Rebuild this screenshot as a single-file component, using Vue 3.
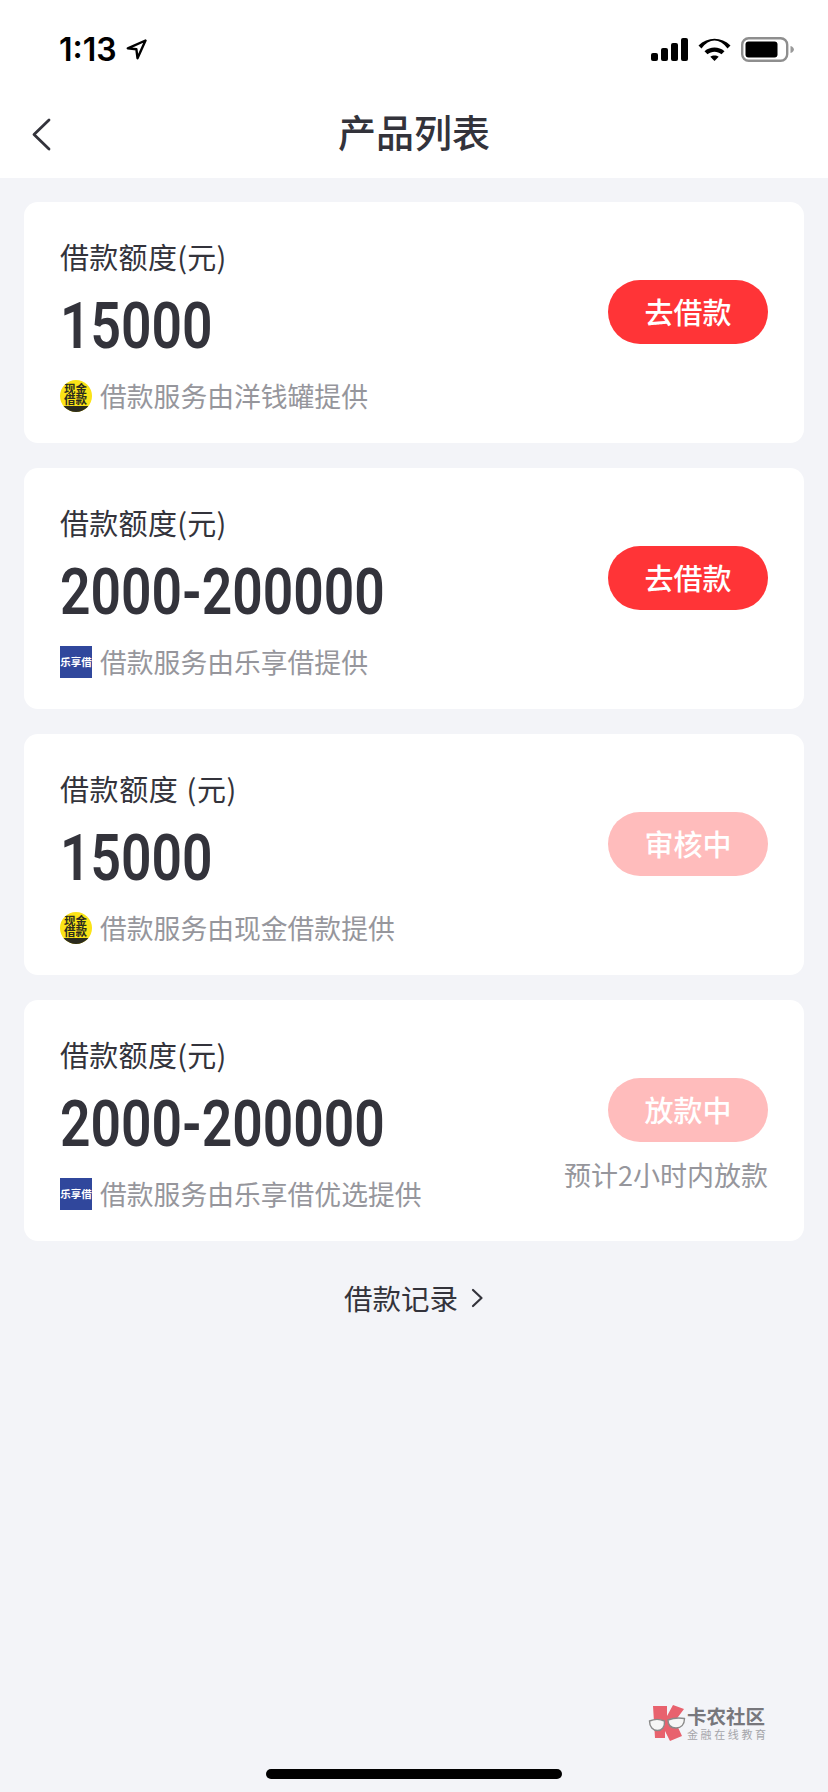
<template>
  <div class="page">
    <div class="status-bar">
      <div class="time">
        <span>1:13</span>
        <svg width="21" height="21" viewBox="0 0 21 21">
          <path d="M19.500 1.500 1.800 9.300l8.600 1 1.100 8.900z" fill="none" stroke="#000" stroke-width="2.400" stroke-linejoin="round" />
        </svg>
      </div>
      <div class="status-icons">
        <svg width="38" height="23" viewBox="0 0 38 23">
          <rect x="0" y="15" width="7" height="8" rx="2" />
          <rect x="10" y="10" width="7" height="13" rx="2" />
          <rect x="20" y="5" width="7" height="18" rx="2" />
          <rect x="30" y="0" width="7" height="23" rx="2" />
        </svg>
        <svg class="wifi" width="33" height="23" viewBox="0 0 33 23">
          <path d="M.5 7.500C9.500-1.500 23.500-1.500 32.500 7.500l-3 3.100C22-.3 11-.3 3.500 10.600z" />
          <path d="M6.500 13.200c5.500-5 14.500-5 20 0l-3 3c-4-3.400-10-3.400-14 0z" />
          <path d="M12.300 18.800c2.200-1.600 6.200-1.600 8.400 0l-4.200 4.200z" />
        </svg>
        <svg class="battery" width="53" height="25" viewBox="0 0 53 25">
          <rect x="1.200" y="1.200" width="45" height="22.600" rx="6.500" fill="none" stroke="#8e8e8e" stroke-width="2.400" />
          <rect x="4.500" y="4.500" width="32" height="16" rx="3" />
          <path d="M49.500 9c2.300.6 3.400 2 3.400 3.500s-1.100 2.900-3.400 3.500z" fill="#999" />
        </svg>
      </div>
    </div>

    <header class="nav">
      <svg class="back" width="20" height="33" viewBox="0 0 20 33">
        <path d="M18 2 3 16.500 18 31" fill="none" stroke="#33333b" stroke-width="2.800" stroke-linecap="round" stroke-linejoin="round" />
      </svg>
      <h1>产品列表</h1>
    </header>

    <main class="list">
      <section v-for="item in products" :key="item.provider" class="card">
        <div class="info">
          <div class="label" :class="{ spaced: item.spaced }">{{ item.label }}</div>
          <div class="amount"><span>{{ item.amount }}</span></div>
          <div class="provider">
            <span v-if="item.logo === 'cash'" class="logo-cash">
              <span class="cash-text">现金借款</span>
              <span class="cash-band"></span>
            </span>
            <span v-else class="logo-lexiang"><span>乐享借</span></span>
            <span>借款服务由{{ item.provider }}提供</span>
          </div>
        </div>
        <div class="action">
          <div class="btn" :class="{ muted: item.muted }">{{ item.action }}</div>
          <div v-if="item.note" class="note">{{ item.note }}</div>
        </div>
      </section>
    </main>

    <div class="record">
      <span>借款记录</span>
      <svg width="13" height="20" viewBox="0 0 13 20">
        <path d="M2 2l8.500 8L2 18" fill="none" stroke="#33333b" stroke-width="2.200" stroke-linecap="round" stroke-linejoin="round" />
      </svg>
    </div>

    <div class="watermark">
      <svg width="38" height="38" viewBox="0 0 38 38">
        <path d="M5 2 19 2 19 12 25 1 36 5 27 17 34 32 22 37 17 27 17 34 7 34z" fill="#e8626e" />
        <path d="M1.500 17c5-2.200 10-2.200 15 0 .5 6-2.500 9.500-7 9.500S1.500 23 1.500 17zM20 16c5-2 11-2.500 16.500-1.500 0 6-3.500 9.500-8.500 9.500s-8-3-8-8z" fill="#f6f6f6" stroke="#8a8a8a" stroke-width="1.400" />
      </svg>
      <div class="wm-text">
        <div class="wm-title">卡农社区</div>
        <div class="wm-sub">金融在线教育</div>
      </div>
    </div>

    <div class="home-indicator"></div>
  </div>
</template>

<script setup>
const products = [
  { label: '借款额度(元)', amount: '15000', logo: 'cash', provider: '洋钱罐', action: '去借款' },
  { label: '借款额度(元)', amount: '2000-200000', logo: 'lexiang', provider: '乐享借', action: '去借款' },
  { label: '借款额度 (元)', spaced: true, amount: '15000', logo: 'cash', provider: '现金借款', action: '审核中', muted: true },
  {
    label: '借款额度(元)',
    amount: '2000-200000',
    logo: 'lexiang',
    provider: '乐享借优选',
    action: '放款中',
    muted: true,
    note: '预计2小时内放款'
  }
]
</script>

<style>
html,
body {
  margin: 0;
  background: #f3f4f8;
}
</style>

<style scoped>
.page {
  position: relative;
  height: 1792px;
  overflow: hidden;
  background: #f3f4f8;
  font-family: "Noto Sans CJK SC", "Liberation Sans", sans-serif;
  color: #33333b;
}

.status-bar {
  height: 98px;
  box-sizing: border-box;
  padding: 0 34px 0 59px;
  background: #fff;
  display: flex;
  justify-content: space-between;
  align-items: center;
}

.time {
  display: flex;
  align-items: center;
  gap: 9px;
  font-family: Inter, sans-serif;
  font-size: 32px;
  font-weight: 600;
  color: #000;
}

.status-icons {
  display: flex;
  align-items: center;
  gap: 9px;
}

.battery {
  margin-left: 1px;
}

.nav {
  height: 80px;
  box-sizing: border-box;
  padding-bottom: 14px;
  background: #fff;
  display: flex;
  align-items: center;
  justify-content: center;
  position: relative;
}

.nav h1 {
  margin: 0;
  font-size: 38px;
  font-weight: 500;
  line-height: 66px;
}

.back {
  position: absolute;
  left: 31px;
  top: 20px;
}

.list {
  padding: 24px 24px 0;
  display: flex;
  flex-direction: column;
  gap: 25px;
}

.card {
  height: 241px;
  box-sizing: border-box;
  padding: 34px 36px 0;
  background: #fff;
  border-radius: 14px;
  display: flex;
  justify-content: space-between;
  align-items: flex-start;
}

.label {
  font-size: 29px;
  line-height: 40px;
  letter-spacing: 0.3px;
}

.label.spaced {
  word-spacing: 1px;
  letter-spacing: 0.6px;
}

.amount {
  margin-top: 13px;
  font-family: Roboto, sans-serif;
  font-size: 64px;
  font-weight: 600;
  line-height: 76px;
}

.amount span {
  display: inline-block;
  transform: scaleX(0.835);
  transform-origin: left center;
}

.provider {
  margin-top: 11px;
  display: flex;
  align-items: center;
  gap: 8px;
  font-size: 26.800px;
  line-height: 40px;
  color: #96969c;
}

.logo-cash {
  position: relative;
  width: 32px;
  height: 32px;
  border-radius: 50%;
  overflow: hidden;
  background: #fbe317;
  display: block;
}

.cash-text {
  display: block;
  width: 24px;
  margin: 0 auto;
  padding-top: 3px;
  font-size: 11.500px;
  line-height: 11px;
  font-weight: 700;
  color: #2b2b1e;
}

.cash-band {
  position: absolute;
  left: 0;
  right: 0;
  bottom: 0;
  height: 6px;
  background: #2b2b1e;
}

.logo-lexiang {
  width: 32px;
  height: 32px;
  background: #30479c;
  color: #fff;
  font-size: 10.500px;
  line-height: 32px;
  font-weight: 700;
  text-align: center;
  white-space: nowrap;
}

.action {
  margin-top: 44px;
  display: flex;
  flex-direction: column;
  align-items: flex-end;
}

.btn {
  width: 160px;
  height: 64px;
  border-radius: 32px;
  background: #ff3437;
  color: #fff;
  font-size: 29px;
  font-weight: 500;
  line-height: 62px;
  text-align: center;
}

.btn.muted {
  background: #ffbcbc;
}

.note {
  margin-top: 13px;
  font-size: 27px;
  line-height: 40px;
  color: #96969c;
  white-space: nowrap;
}

.record {
  margin-top: 37px;
  height: 40px;
  display: flex;
  justify-content: center;
  align-items: center;
  gap: 13px;
  font-size: 28.500px;
  line-height: 40px;
}

.watermark {
  position: absolute;
  left: 648px;
  top: 1704px;
  display: flex;
  align-items: center;
  gap: 1px;
}

.wm-title {
  font-size: 19.500px;
  font-weight: 700;
  line-height: 22px;
  color: #77777c;
}

.wm-sub {
  font-size: 11px;
  line-height: 14px;
  letter-spacing: 2.600px;
  white-space: nowrap;
  color: #a5a5aa;
}

.home-indicator {
  position: absolute;
  left: 266px;
  top: 1769px;
  width: 296px;
  height: 10px;
  border-radius: 5px;
  background: #000;
}
</style>
